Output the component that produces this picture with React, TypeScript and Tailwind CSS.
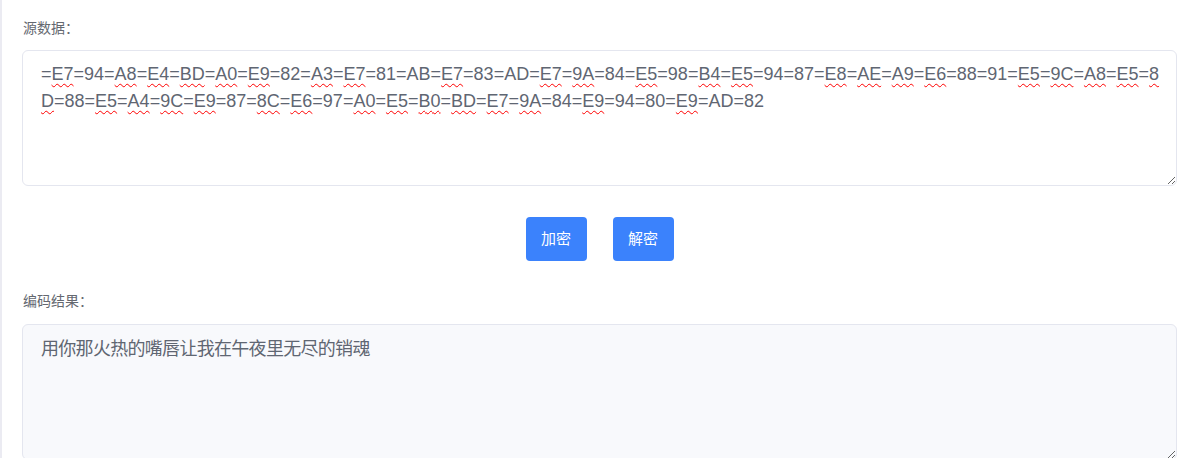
import React from "react";

const tokens =
  "E7 94 A8 E4 BD A0 E9 82 A3 E7 81 AB E7 83 AD E7 9A 84 E5 98 B4 E5 94 87 E8 AE A9 E6 88 91 E5 9C A8 E5 8D 88 E5 A4 9C E9 87 8C E6 97 A0 E5 B0 BD E7 9A 84 E9 94 80 E9 AD 82".split(
    " "
  );

const flagged = (t: string) => /[A-F]/.test(t) && t !== "AB" && t !== "AD";

export default function App() {
  return (
    <div
      className="min-h-[458px] border-l-2 border-[#ebebf2] bg-white pl-[20px] pr-[11px] pt-[18px]"
      style={{ fontFamily: "'Liberation Sans', 'Noto Sans CJK SC', sans-serif" }}
    >
      <div className="h-5 pl-px text-[14px] leading-5 text-[#646870]">源数据：</div>
      <div className="mt-[12px] h-[136px] resize-y overflow-auto break-all rounded-[6px] border border-[#e4e6ef] bg-white pl-[18px] pr-[12px] pt-[10px] text-[18px] leading-[27px] text-[#5f6672]">
        {tokens.map((t, i) => (
          <React.Fragment key={i}>
            =
            {flagged(t) ? (
              <span className="underline decoration-[#f00] decoration-wavy decoration-1 underline-offset-[3px]">
                {t}
              </span>
            ) : (
              t
            )}
          </React.Fragment>
        ))}
      </div>
      <div className="mt-[31px] flex justify-center gap-[26px]">
        <button className="h-[44px] w-[61px] rounded-[4px] bg-[#3b82fc] text-[15px] text-white">加密</button>
        <button className="h-[44px] w-[61px] rounded-[4px] bg-[#3b82fc] text-[15px] text-white">解密</button>
      </div>
      <div className="mt-[30px] h-5 pl-px text-[14px] leading-5 text-[#646870]">编码结果：</div>
      <textarea
        readOnly
        spellCheck={false}
        className="mt-[13px] block h-[136px] w-full resize-y rounded-[6px] border border-[#e4e6ef] bg-[#f8f9fc] pl-[18px] pr-[12px] pt-[9px] text-[18px] leading-[27px] tracking-[-0.7px] text-[#5f6672] outline-none"
        style={{ fontFamily: "'Noto Sans CJK SC', sans-serif" }}
        value="用你那火热的嘴唇让我在午夜里无尽的销魂"
      />
    </div>
  );
}
